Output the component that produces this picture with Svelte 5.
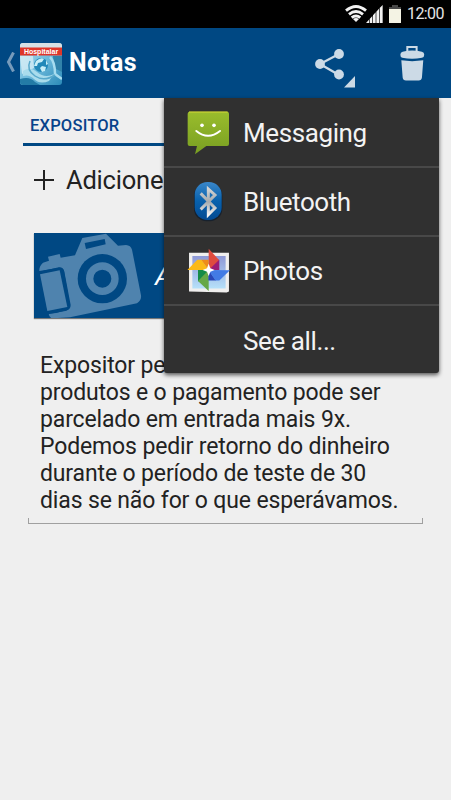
<script>
    const apps = [
        { id: "messaging", name: "Messaging" },
        { id: "bluetooth", name: "Bluetooth" },
        { id: "photos", name: "Photos" },
        { id: "all", name: "See all..." },
    ];

    const note = [
        "Expositor pe",
        "produtos e o pagamento pode ser",
        "parcelado em entrada mais 9x.",
        "Podemos pedir retorno do dinheiro",
        "durante o período de teste de 30",
        "dias se não for o que esperávamos.",
    ];

    let menuOpen = true;

    function toggleMenu() {
        menuOpen = !menuOpen;
    }
</script>

<div class="screen">
    <div class="status">
        <svg class="wifi" viewBox="0 0 66 51" width="22" height="17">
            <g fill="none" stroke="#f2f2f2" stroke-width="8.500">
                <path d="M3 17Q33-8 63 17" />
                <path d="M12 28Q33 11 54 28" />
                <path d="M20 38Q33 28 46 38" />
            </g>
            <path d="M33 51L24 42Q33 36 42 42z" fill="#f2f2f2" />
        </svg>
        <svg class="signal" viewBox="0 0 51 54" width="17" height="18">
            <path
                d="M0 54L9 44V54zM11 54V42L19 33V54zM21 54V31L29 22V54zM31 54V20L39 11V54zM41 54V9L50 0V54z"
                fill="#f2f2f2"
            />
        </svg>
        <svg class="battery" viewBox="0 0 12 18" width="12" height="18">
            <path d="M3 0h6v2h3v2H0V2h3z" fill="#484848" />
            <path d="M0 4h12v14H0z" fill="#f4f3e4" />
        </svg>
        <span class="time">12:00</span>
    </div>

    <div class="header">
        <svg class="back" viewBox="0 0 9 20" width="9" height="20">
            <path d="M7.500 0.500L2.500 10l5 9.500" fill="none" stroke="#779bbb" stroke-width="3" />
        </svg>
        <svg class="logo" viewBox="0 0 42 42" width="42" height="42">
            <defs>
                <linearGradient id="water" x1="0" y1="0" x2="1" y2="1">
                    <stop offset="0" stop-color="#b9e2f2" />
                    <stop offset="0.5" stop-color="#6fbbdc" />
                    <stop offset="1" stop-color="#2b8ab8" />
                </linearGradient>
                <clipPath id="tile"><rect width="42" height="42" rx="3" /></clipPath>
            </defs>
            <g clip-path="url(#tile)">
                <rect width="42" height="42" fill="url(#water)" />
                <path d="M0 0h42v5H0z" fill="#d6e1e5" />
                <path d="M0 13l13 0 1 12L2 31z" fill="#d5eef6" opacity="0.8" />
                <path d="M33 13l9 0v16l-8-4z" fill="#3183aa" />
                <path d="M30 14q5 5 5 17l7 5" fill="none" stroke="#a7dcef" stroke-width="2.500" />
                <path d="M3 28q7-5 14 1 8 7 17 2l-5 7q-9 4-15-2-5-5-11-3z" fill="#a9dcec" />
                <path d="M0 36q10-3 15 3l5 3H0z" fill="#237ba6" />
                <circle cx="21" cy="22" r="7" fill="#2289b9" />
                <path d="M16 18q5-4 8-2l-2 3-4 1-1 3-3 0zM22 23l4 1-1 4-3 1-2-4zM26 17l2 4-2 1z" fill="#c7eef7" />
                <path d="M10 18q-4 9 5 15t20-1" fill="none" stroke="#58a9cb" stroke-width="1.500" />
                <path d="M0 4.500h42v8H0z" fill="#df3629" />
            </g>
            <text x="21" y="11" text-anchor="middle">Hospitalar</text>
        </svg>
        <h1>Notas</h1>
        <button class="share" aria-label="Compartilhar" on:click={toggleMenu}>
            <svg viewBox="0 0 40 42" width="40" height="42">
                <path d="M24 7L5 17l19 11" fill="none" stroke="#ccdae6" stroke-width="2.300" />
                <g fill="#ccdae6">
                    <circle cx="24" cy="7" r="4.900" />
                    <circle cx="5" cy="17" r="4.900" />
                    <circle cx="24" cy="27.500" r="4.900" />
                    <path d="M40 29v11.500H29z" />
                </g>
            </svg>
        </button>
        <button class="trash" aria-label="Excluir">
            <svg viewBox="0 0 74 104" width="24.600" height="34.600">
                <path d="M22 18V3h28v15" fill="none" stroke="#ccdae6" stroke-width="6" />
                <path
                    d="M8 17Q36 10 66 17Q73 19 73 26Q73 34 66 35Q36 42 7 35Q1 34 1 26Q1 19 8 17z"
                    fill="#ccdae6"
                />
                <path d="M4 43Q36 48 70 43L66 95Q65 104 56 104H18Q9 104 8 95z" fill="#ccdae6" />
            </svg>
        </button>
    </div>

    <div class="content">
        <div class="section">EXPOSITOR</div>
        <div class="add">
            <svg viewBox="0 0 20 20" width="20" height="20">
                <path d="M0 10h20M10 0v20" stroke="#222" stroke-width="2" />
            </svg>
            <span>Adicione</span>
        </div>
        <div class="photo">
            <svg viewBox="42 24 345 255" width="115" height="85">
                <path
                    fill="#4f83ae"
                    d="M58 138Q57 123 69 113L87 107L84 95L119 87L122 98L165 91L187 39L258 26L294 62L318 60Q332 61 336 74L363 211Q365 226 351 235L150 277L95 280Q87 276 86 266L108 264L141 255Q151 249 149 237L132 139Q129 127 117 128z"
                />
                <path fill="#004883" d="M194 54L254 42L257 58L198 72z" />
                <path
                    fill="none"
                    stroke="#004883"
                    stroke-width="6"
                    d="M58 143L117 130Q127 129 130 140L149 240Q149 251 139 254L82 265"
                />
                <path fill="#4f83ae" d="M60 148L119 136L142 246L82 258z" />
                <circle cx="247" cy="161" r="74" fill="#004883" />
                <circle cx="247" cy="161" r="38" fill="none" stroke="#4f83ae" stroke-width="22" />
            </svg>
            <span>A</span>
        </div>
        <div class="note">
            {#each note as line}
                <div>{line}</div>
            {/each}
        </div>
    </div>

    {#if menuOpen}
        <div class="menu">
            {#each apps as app}
                <div class="item">
                    <div class="icon">
                        {#if app.id === "messaging"}
                            <svg viewBox="82 45 129 132" width="43" height="44">
                                <defs>
                                    <linearGradient id="bubble" x1="0" y1="0" x2="0" y2="1">
                                        <stop offset="0" stop-color="#9abd2c" />
                                        <stop offset="1" stop-color="#789e22" />
                                    </linearGradient>
                                </defs>
                                <path
                                    d="M90 47H202Q208 47 208 53V144Q208 150 202 150H140L106 175L112 150H90Q84 150 84 144V53Q84 47 90 47z"
                                    fill="url(#bubble)"
                                />
                                <path d="M88 48H204" stroke="#d5da36" stroke-width="3" />
                                <circle cx="127" cy="88" r="5.500" fill="#fff" />
                                <circle cx="163" cy="88" r="5.500" fill="#fff" />
                                <path d="M110 105Q145 134 181 105" fill="none" stroke="#fff" stroke-width="6" stroke-linecap="round" />
                            </svg>
                        {:else if app.id === "bluetooth"}
                            <svg viewBox="82 255 129 129" width="43" height="43">
                                <defs>
                                    <linearGradient id="blue" x1="0" y1="0" x2="0" y2="1">
                                        <stop offset="0" stop-color="#3a87c9" />
                                        <stop offset="0.5" stop-color="#0861ad" />
                                        <stop offset="1" stop-color="#034a92" />
                                    </linearGradient>
                                    <linearGradient id="silver" x1="0" y1="0" x2="0" y2="1">
                                        <stop offset="0" stop-color="#d4d4d4" />
                                        <stop offset="0.5" stop-color="#a3a9ad" />
                                        <stop offset="1" stop-color="#f2f2f2" />
                                    </linearGradient>
                                </defs>
                                <rect x="103" y="264" width="85" height="115" rx="38" fill="#17212d" />
                                <rect x="105" y="261" width="81" height="114" rx="38" fill="url(#blue)" />
                                <path
                                    d="M123 295L166 339L146 359V282L166 300L123 343"
                                    fill="none"
                                    stroke="url(#silver)"
                                    stroke-width="9"
                                />
                            </svg>
                        {:else if app.id === "photos"}
                            <svg viewBox="81 37 129 137" width="43" height="45.600">
                                <defs>
                                    <linearGradient id="sky" x1="0" y1="0" x2="0" y2="1">
                                        <stop offset="0" stop-color="#8e98d6" />
                                        <stop offset="1" stop-color="#b6e1fa" />
                                    </linearGradient>
                                </defs>
                                <path d="M87 51H207V168L200 171L87 168z" fill="#f0efee" />
                                <path d="M97 61H197V159H97z" fill="url(#sky)" />
                                <path d="M146 103H178V73L163 66z" fill="#9b1c75" />
                                <path d="M146 39L177 73L146 103z" fill="#df4b3e" />
                                <path d="M146 103L123 72H146z" fill="#ef8b19" />
                                <path d="M82 103L112 72H124L146 103z" fill="#fbb916" />
                                <path d="M146 103H114V136L130 145z" fill="#158b47" />
                                <path d="M146 103V166L114 136z" fill="#65a847" />
                                <path d="M146 103L168 135H145z" fill="#2948b7" />
                                <path d="M146 103L210 104L178 135H166z" fill="#427be5" />
                                <path d="M146 84L151 98L164 103L151 108L146 121L141 108L128 103L141 98z" fill="#fff" />
                            </svg>
                        {/if}
                    </div>
                    <span>{app.name}</span>
                </div>
            {/each}
        </div>
    {/if}
</div>

<style>
    :global(body) {
        margin: 0;
    }
    .screen {
        position: relative;
        width: 451px;
        height: 800px;
        overflow: hidden;
        background: #efefef;
        font-family: Roboto, sans-serif;
    }
    svg {
        display: block;
        flex-shrink: 0;
    }
    .status {
        height: 28px;
        box-sizing: border-box;
        padding: 5px 7px 0 0;
        display: flex;
        justify-content: flex-end;
        background: #000;
    }
    .signal {
        margin-left: -1px;
    }
    .battery {
        margin: 0 6px 0 6px;
    }
    .time {
        width: 37px;
        font-size: 16px;
        line-height: 18px;
        letter-spacing: -0.6px;
        color: #e5e5e5;
        white-space: nowrap;
    }
    .header {
        height: 70px;
        box-sizing: border-box;
        padding-left: 6px;
        display: flex;
        align-items: flex-start;
        background: #004883;
    }
    .back {
        margin-top: 24px;
    }
    .logo {
        margin: 15px 0 0 5px;
        overflow: visible;
    }
    .logo text {
        font: bold 7px "Liberation Sans", sans-serif;
        fill: #fff;
    }
    h1 {
        width: 247px;
        margin: 19px 0 0 7px;
        font-size: 25px;
        line-height: 32px;
        font-weight: 700;
        letter-spacing: 0.3px;
        color: #fff;
    }
    button {
        padding: 0;
        border: 0;
        background: none;
    }
    .share {
        margin: 19px 0 0 -1px;
    }
    .trash {
        margin: 18px 0 0 45px;
    }
    .content {
        padding: 0 23px;
    }
    .section {
        height: 45px;
        padding-left: 7px;
        border-bottom: 3px solid #004883;
        font-size: 16.5px;
        line-height: 55px;
        font-weight: 500;
        letter-spacing: 0.2px;
        color: #08438b;
    }
    .add {
        height: 70px;
        padding: 0 0 3px 11px;
        box-sizing: border-box;
        display: flex;
        align-items: center;
        gap: 12px;
        font-size: 25.5px;
        letter-spacing: -0.2px;
        color: #222;
    }
    .photo {
        height: 85px;
        margin: 17px 11px 0;
        display: flex;
        align-items: center;
        background: #004883;
        color: #fff;
        font-size: 26px;
        font-style: italic;
        box-shadow: 0 1px 1px #777;
    }
    .photo span {
        margin-left: 6px;
    }
    .note {
        width: 395px;
        height: 206px;
        box-sizing: border-box;
        margin: 0 0 0 5px;
        padding: 34px 0 0 12px;
        border-bottom: 1px solid #a0a0a0;
        background:
            linear-gradient(#a0a0a0, #a0a0a0) 0 100% / 1px 5px no-repeat,
            linear-gradient(#a0a0a0, #a0a0a0) 100% 100% / 1px 5px no-repeat;
        font-size: 23px;
        line-height: 27px;
        letter-spacing: -0.14px;
        color: #222;
        white-space: nowrap;
    }
    .menu {
        position: absolute;
        top: 98px;
        left: 164px;
        width: 275px;
        height: 275px;
        box-sizing: border-box;
        padding-top: 1px;
        border-radius: 0 0 3px 3px;
        background: #303030;
        box-shadow: 0 2px 4px rgba(0, 0, 0, 0.65);
    }
    .item {
        height: 69px;
        box-sizing: border-box;
        padding-left: 23px;
        display: flex;
        align-items: center;
        border-bottom: 2px solid #484848;
        font-size: 26px;
        letter-spacing: -0.4px;
        color: #f3f3f3;
    }
    .item:last-child {
        border-bottom: 0;
    }
    .icon {
        width: 43px;
        margin-right: 13px;
    }
</style>
